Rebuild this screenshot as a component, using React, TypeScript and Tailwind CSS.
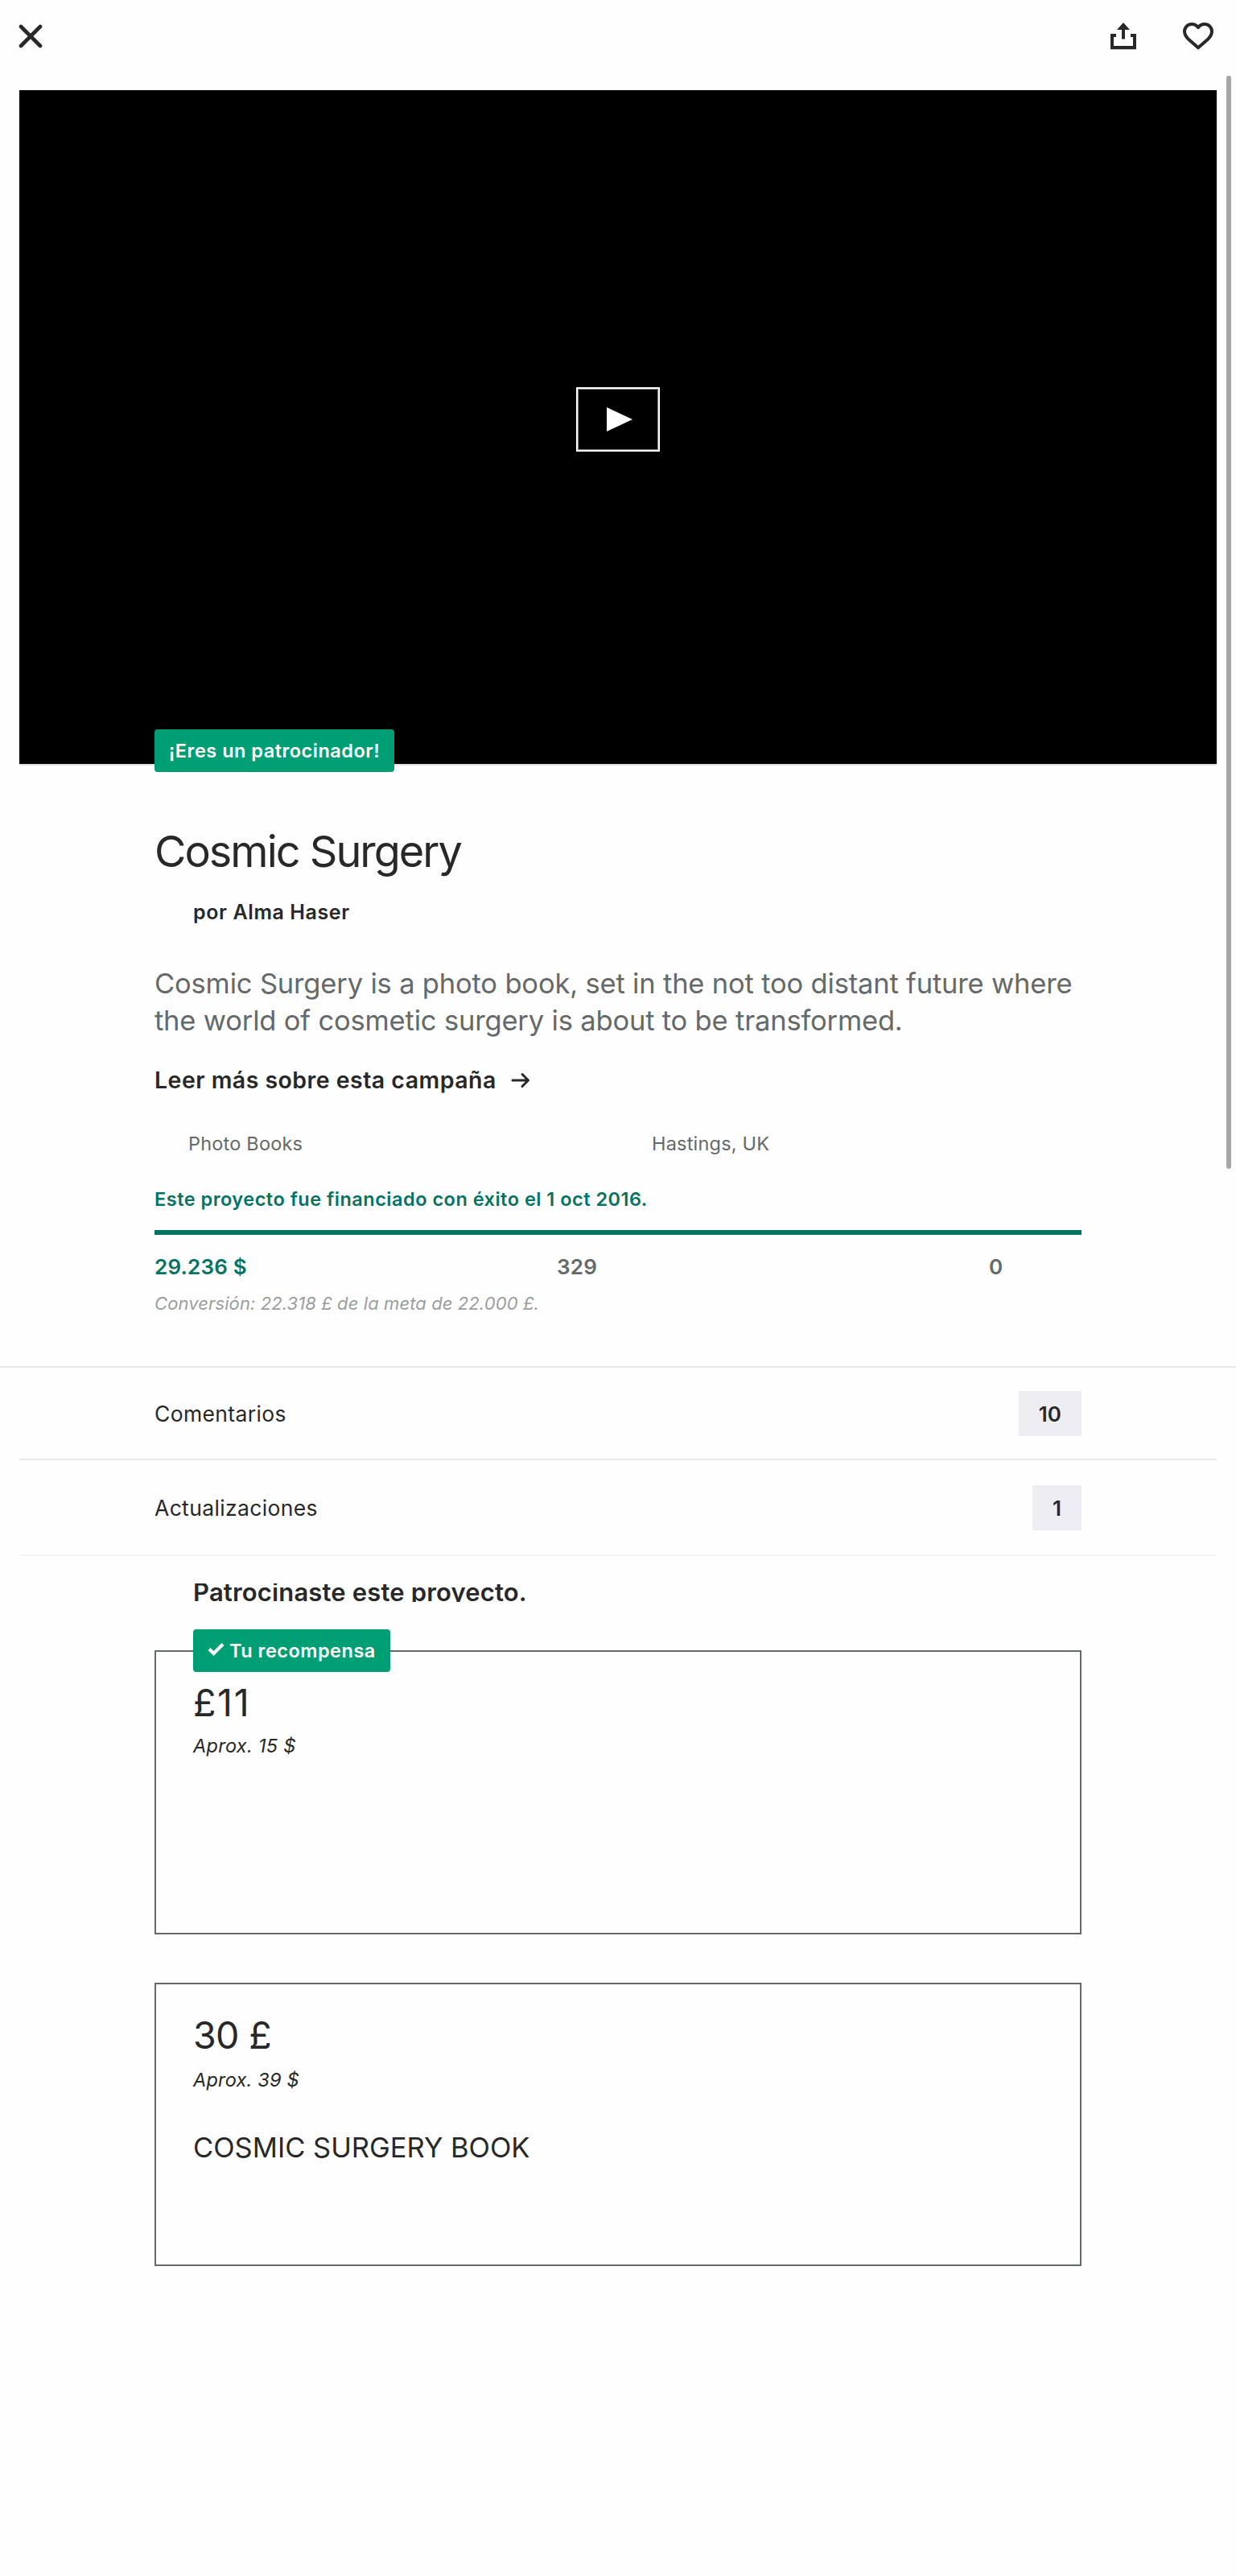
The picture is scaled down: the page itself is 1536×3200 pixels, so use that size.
import type { ReactNode } from "react";

function CloseIcon() {
  return (
    <svg width="30" height="30" viewBox="0 0 30 30" fill="none" stroke="#282828" strokeWidth="4.6" strokeLinecap="round">
      <path d="M3 3 27 27M27 3 3 27" />
    </svg>
  );
}

function ShareIcon() {
  return (
    <svg width="32" height="34" viewBox="0 0 32 34" fill="#282828">
      <path d="M16 0 24 9H18V20.5H14V9H8Z" />
      <path d="M0 14H7V18H4V29H28V18H25V14H32V33.3H0Z" />
    </svg>
  );
}

function HeartIcon() {
  return (
    <svg width="38" height="34" viewBox="0 0 38 34" fill="none" stroke="#282828" strokeWidth="4" strokeLinejoin="round">
      <path d="M19 6.2C17 3.4 14.2 2 11 2 6 2 2 6 2 11c0 4.2 2.2 7.2 5.5 10.3L19 31.3 30.5 21.3C33.8 18.2 36 15.2 36 11c0-5-4-9-9-9-3.2 0-6 1.4-8 4.2Z" />
    </svg>
  );
}

function Row({ label, count, className }: { label: string; count: string; className: string }) {
  return (
    <div className={`mx-6 px-[168px] flex items-center justify-between border-b-2 ${className}`}>
      <span className="pt-0.5 text-[26.5px] tracking-[0.35px]">{label}</span>
      <span className="h-14 px-[25px] flex items-center bg-[#eeeef2] text-[26px] font-semibold">{count}</span>
    </div>
  );
}

function Reward({ amount, approx, className, children }: { amount: ReactNode; approx: ReactNode; className: string; children?: ReactNode }) {
  return (
    <article className={`relative border-2 border-[#656969] px-[46px] pt-[35px] ${className}`}>
      <div className="text-[46.5px] leading-[56px] tracking-[-0.6px]">{amount}</div>
      {approx}
      {children}
    </article>
  );
}

export default function App() {
  return (
    <div className="relative w-[1536px] h-[3200px] overflow-hidden bg-[#fefefe] text-[#282828] font-['Inter',sans-serif]">
      <header className="h-28 pl-[23px] pr-7 pt-7 flex items-start justify-between">
        <button aria-label="Cerrar" className="mt-0.5"><CloseIcon /></button>
        <div className="flex gap-[58px]">
          <button aria-label="Compartir"><ShareIcon /></button>
          <button aria-label="Guardar"><HeartIcon /></button>
        </div>
      </header>

      <div className="relative mx-6 h-[839px] border-b-2 border-[#e4e4e4] bg-black flex justify-center pt-[369px]">
        <div className="w-[104px] h-20 border-2 border-white shadow-[inset_0_0_0_1px_#808080] flex items-center justify-center">
          <svg width="32" height="30" viewBox="0 0 32 30" fill="#fff" className="ml-1"><path d="M0 0 32 15 0 30Z" /></svg>
        </div>
        <span className="absolute left-[168px] top-[794px] w-[298px] h-[53px] rounded bg-[#009e74] text-white flex items-center justify-center text-[23.5px] font-semibold tracking-[0.5px] whitespace-nowrap">
          ¡Eres un patrocinador!
        </span>
      </div>

      <main className="px-48 pt-[75px] pb-[63px]">
        <h1 className="text-[54px] leading-[64px] tracking-[-2px]">Cosmic Surgery</h1>
        <p className="mt-[27px] ml-12 text-[25px] leading-[33px] font-semibold tracking-[0.6px]">por Alma Haser</p>
        <p className="mt-[49px] text-[34.5px] leading-[46px] tracking-[-0.17px] text-[#656969] whitespace-nowrap">
          Cosmic Surgery is a photo book, set in the not too distant future where<br />
          the world of cosmetic surgery is about to be transformed.
        </p>
        <a className="mt-[30px] flex items-center gap-[18px] text-[28.5px] leading-[41px] font-semibold tracking-[0.47px]">
          Leer más sobre esta campaña
          <svg width="24" height="20" viewBox="0 0 24 20" fill="none" stroke="#282828" strokeWidth="3" strokeLinecap="round" strokeLinejoin="round">
            <path d="M2 10H21M14 2.5 21.5 10 14 17.5" />
          </svg>
        </a>
        <div className="mt-[42px] grid grid-cols-2 text-[23.5px] leading-[33px] tracking-[0.2px] text-[#656969]">
          <span className="pl-[42px]">Photo Books</span>
          <span className="pl-[42px]">Hastings, UK</span>
        </div>
        <p className="mt-[37px] text-[23.5px] leading-8 font-semibold tracking-[0.5px] text-[#037362]">
          Este proyecto fue financiado con éxito el 1 oct 2016.
        </p>
        <div className="mt-[22px] h-1.5 bg-[#037362]" />
        <div className="mt-6 grid grid-cols-[500px_537px_1fr] text-[26px] leading-8 font-semibold tracking-[0.2px] text-[#656969]">
          <span className="text-[#037362]">29.236 $</span>
          <span>329</span>
          <span>0</span>
        </div>
        <p className="mt-3.5 text-[22px] leading-[30px] italic tracking-[0.1px] text-[#9b9e9e]">
          Conversión: 22.318 £ de la meta de 22.000 £.
        </p>
      </main>

      <section className="border-t-2 border-[#e8e8e8]">
        <Row label="Comentarios" count="10" className="pt-[29px] pb-7 border-[#e8e8e8]" />
        <Row label="Actualizaciones" count="1" className="pt-[31px] pb-[30px] border-[#f6f6f6]" />
      </section>

      <section className="px-48 pt-[34px]">
        <h2 className="ml-12 h-[23px] leading-[22px] overflow-hidden text-[31px] font-semibold tracking-[0.16px]">Patrocinaste este proyecto.</h2>
        <Reward
          amount={<span className="tracking-[1.7px]">£11</span>}
          className="mt-[60px] h-[353px]"
          approx={<p className="mt-2.5 text-[23.5px] leading-8 italic tracking-[0.3px]">Aprox. 15 $</p>}
        >
          <span className="absolute left-[46px] -top-7 w-[245px] h-[53px] rounded bg-[#009e74] text-white flex items-center pl-[18px] gap-1.5 text-[23.5px] font-semibold tracking-[0.5px] whitespace-nowrap">
            <svg width="21" height="17" viewBox="0 0 21 17" fill="none" stroke="#fff" strokeWidth="4.2" className="-mt-1">
              <path d="M2 8.5 7.5 14 19 2.5" />
            </svg>
            Tu recompensa
          </span>
        </Reward>
        <Reward
          amount="30 £"
          className="mt-[60px] h-[352px]"
          approx={<p className="mt-3 text-[23.5px] leading-8 italic tracking-[0.2px]">Aprox. 39 $</p>}
        >
          <p className="mt-[45px] text-[34.5px] leading-[46px]">COSMIC SURGERY BOOK</p>
        </Reward>
      </section>

      <div className="absolute right-1.5 top-[94px] w-1.5 h-[1358px] rounded-full bg-[#a6a6a6]" />
    </div>
  );
}
